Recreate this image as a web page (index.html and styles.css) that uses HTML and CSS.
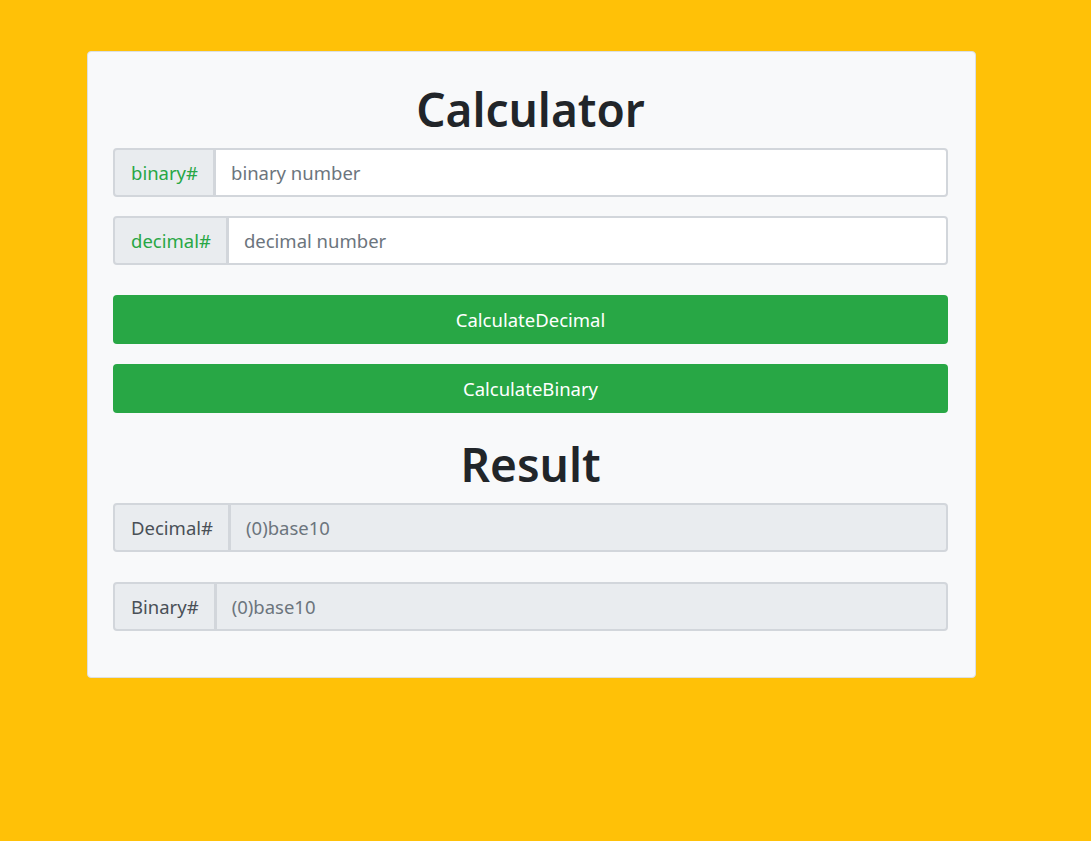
FILE: index.html
```html
<!DOCTYPE html>
<html lang="en">
<head>
<meta charset="utf-8">
<title>Calculator</title>
<link rel="stylesheet" href="styles.css">
</head>
<body>
<div class="card">
  <h1 class="title">Calculator</h1>
  <div class="group">
    <span class="addon addon-green">binary#</span>
    <input class="field" type="text" placeholder="binary number">
  </div>
  <div class="group group-second">
    <span class="addon addon-green">decimal#</span>
    <input class="field" type="text" placeholder="decimal number">
  </div>
  <button class="btn btn-first" type="button">CalculateDecimal</button>
  <button class="btn" type="button">CalculateBinary</button>
  <h1 class="title title-result">Result</h1>
  <div class="group">
    <span class="addon">Decimal#</span>
    <input class="field field-readonly" type="text" placeholder="(0)base10" readonly>
  </div>
  <div class="group group-result2">
    <span class="addon">Binary#</span>
    <input class="field field-readonly" type="text" placeholder="(0)base10" readonly>
  </div>
</div>
</body>
</html>
```

FILE: styles.css
```css
html, body {
  margin: 0;
  padding: 0;
}
body {
  background: #ffc107;
  font-family: "Noto Sans", "Open Sans", sans-serif;
  min-height: 841px;
  padding-top: 51px;
  box-sizing: border-box;
}
.card {
  margin-left: 87px;
  width: 889px;
  box-sizing: border-box;
  background: #f8f9fa;
  border: 1px solid #dcdfe2;
  border-radius: 4px;
  padding: 28px 27px 46px 25px;
  display: flex;
  flex-direction: column;
}
.title {
  margin: 0 0 10px;
  text-align: center;
  font-size: 46px;
  font-weight: 600;
  line-height: 58px;
  color: #212529;
}
.title-result {
  margin-top: 22px;
  margin-bottom: 10px;
}
.group {
  display: flex;
  height: 49px;
  box-sizing: border-box;
}
.group-second {
  margin-top: 19px;
}
.group-result2 {
  margin-top: 30px;
}
.addon {
  display: flex;
  align-items: center;
  padding: 0 15px 0 16px;
  background: #e9ecef;
  border: 2px solid #d2d6db;
  border-radius: 4px 0 0 4px;
  font-size: 18.5px;
  color: #495057;
  white-space: nowrap;
}
.addon-green {
  color: #28a745;
}
.field {
  flex: 1;
  min-width: 0;
  height: 49px;
  box-sizing: border-box;
  margin: 0;
  margin-left: -1px;
  padding: 0 15px;
  border: 2px solid #d2d6db;
  border-radius: 0 4px 4px 0;
  background: #fff;
  font-family: inherit;
  font-size: 18.5px;
  color: #495057;
  outline: none;
}
.field::placeholder {
  color: #6c757d;
}
.field-readonly {
  background: #e9ecef;
}
.btn {
  display: block;
  height: 49px;
  margin: 20px 0 0;
  border: 0;
  border-radius: 4px;
  background: #28a745;
  color: #fff;
  font-family: inherit;
  font-size: 18.5px;
}
.btn-first {
  margin-top: 30px;
}
```
